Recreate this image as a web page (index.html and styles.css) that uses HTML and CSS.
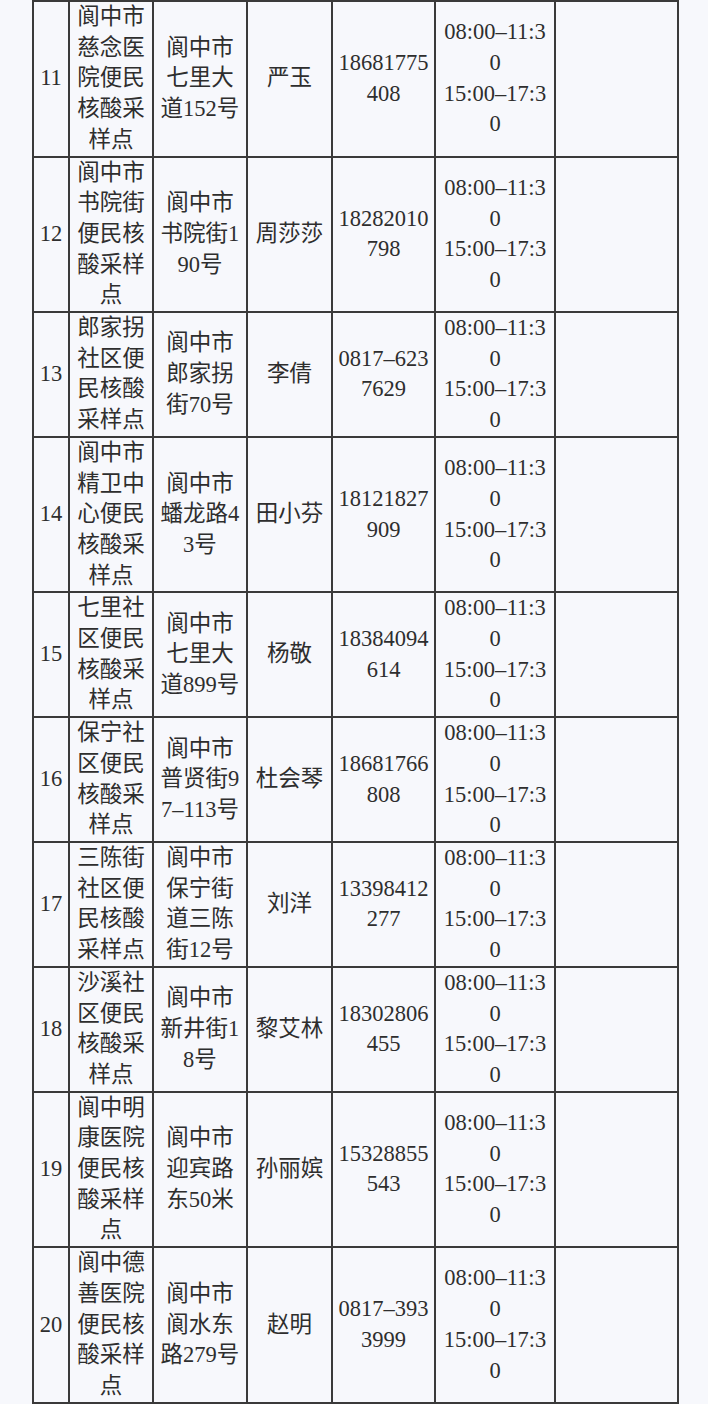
FILE: index.html
```html
<!DOCTYPE html>
<html lang="zh-CN">
<head>
<meta charset="utf-8">
<title>核酸采样点</title>
<link rel="stylesheet" href="styles.css">
</head>
<body>
<table class="sites">
<colgroup>
<col class="c-no"><col class="c-name"><col class="c-addr"><col class="c-person"><col class="c-phone"><col class="c-hours"><col class="c-note">
</colgroup>
<tbody>
<tr><td>11</td><td>阆中市慈念医院便民核酸采样点</td><td>阆中市七里大道152号</td><td>严玉</td><td>18681775408</td><td>08:00–11:30<br>15:00–17:30</td><td></td></tr>
<tr><td>12</td><td>阆中市书院街便民核酸采样点</td><td>阆中市书院街190号</td><td>周莎莎</td><td>18282010798</td><td>08:00–11:30<br>15:00–17:30</td><td></td></tr>
<tr><td>13</td><td>郎家拐社区便民核酸采样点</td><td>阆中市郎家拐街70号</td><td>李倩</td><td>0817–6237629</td><td>08:00–11:30<br>15:00–17:30</td><td></td></tr>
<tr><td>14</td><td>阆中市精卫中心便民核酸采样点</td><td>阆中市蟠龙路43号</td><td>田小芬</td><td>18121827909</td><td>08:00–11:30<br>15:00–17:30</td><td></td></tr>
<tr><td>15</td><td>七里社区便民核酸采样点</td><td>阆中市七里大道899号</td><td>杨敬</td><td>18384094614</td><td>08:00–11:30<br>15:00–17:30</td><td></td></tr>
<tr><td>16</td><td>保宁社区便民核酸采样点</td><td>阆中市普贤街97–113号</td><td>杜会琴</td><td>18681766808</td><td>08:00–11:30<br>15:00–17:30</td><td></td></tr>
<tr><td>17</td><td>三陈街社区便民核酸采样点</td><td>阆中市保宁街道三陈街12号</td><td>刘洋</td><td>13398412277</td><td>08:00–11:30<br>15:00–17:30</td><td></td></tr>
<tr><td>18</td><td>沙溪社区便民核酸采样点</td><td>阆中市新井街18号</td><td>黎艾林</td><td>18302806455</td><td>08:00–11:30<br>15:00–17:30</td><td></td></tr>
<tr><td>19</td><td>阆中明康医院便民核酸采样点</td><td>阆中市迎宾路东50米</td><td>孙丽嫔</td><td>15328855543</td><td>08:00–11:30<br>15:00–17:30</td><td></td></tr>
<tr><td>20</td><td>阆中德善医院便民核酸采样点</td><td>阆中市阆水东路279号</td><td>赵明</td><td>0817–3933999</td><td>08:00–11:30<br>15:00–17:30</td><td></td></tr>
</tbody>
</table>
</body>
</html>
```
FILE: styles.css
```css
html, body {
  margin: 0;
  padding: 0;
  background: #f7f8fc;
}
body {
  padding: 0 0 0 32px;
  font-family: "Liberation Serif", "Noto Sans CJK SC", serif;
  font-size: 22.5px;
  color: #2e2e2e;
}
.sites {
  border-collapse: collapse;
  table-layout: fixed;
  width: 645px;
}
.c-no { width: 36px; }
.c-name { width: 84px; }
.c-addr { width: 94px; }
.c-person { width: 85px; }
.c-phone { width: 103px; }
.c-hours { width: 120px; }
.c-note { width: 123px; }
.sites td {
  border: 2px solid #3a3a3a;
  padding: 0 3px;
  line-height: 30.7px;
  text-align: center;
  vertical-align: middle;
  word-break: break-all;
}
```
